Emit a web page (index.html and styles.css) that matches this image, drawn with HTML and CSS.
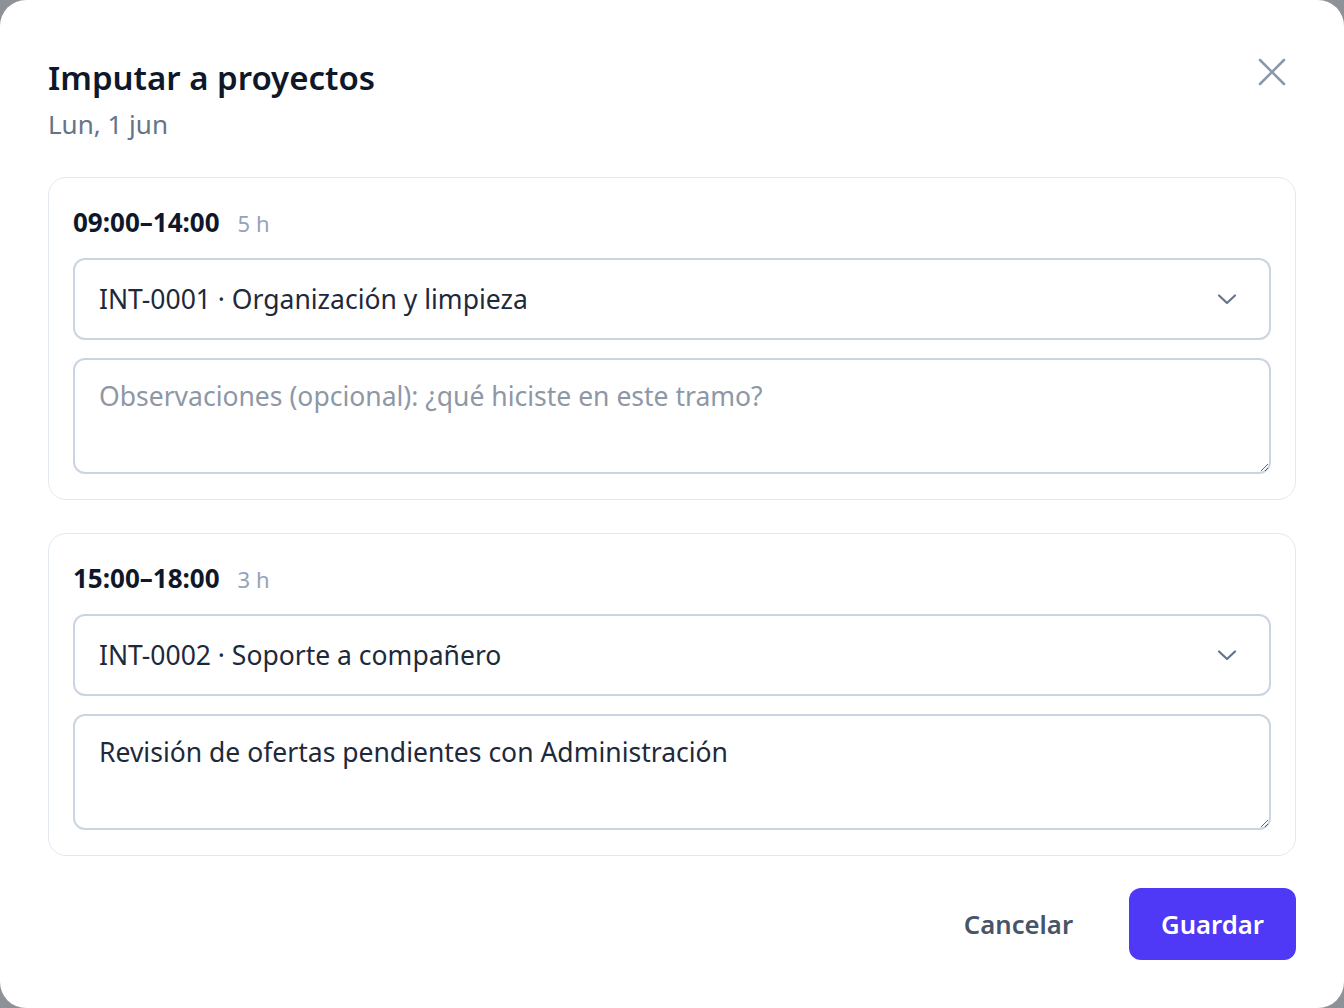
FILE: index.html
```html
<!DOCTYPE html>
<html lang="es">
<head>
<meta charset="utf-8">
<title>Imputar a proyectos</title>
<link rel="stylesheet" href="styles.css">
</head>
<body>
<div class="modal">
  <header class="modal-header">
    <div class="titles">
      <h1 class="title">Imputar a proyectos</h1>
      <p class="subtitle">Lun, 1 jun</p>
    </div>
    <button class="close" aria-label="Cerrar">
      <svg width="34" height="34" viewBox="0 0 34 34" fill="none" stroke="currentColor" stroke-width="2.6" stroke-linecap="round"><path d="M5 5L29 29M29 5L5 29"/></svg>
    </button>
  </header>

  <section class="slot">
    <div class="slot-head"><span class="range">09:00–14:00</span><span class="hours">5 h</span></div>
    <div class="select"><span>INT-0001 · Organización y limpieza</span>
      <svg width="22" height="14" viewBox="0 0 22 14" fill="none" stroke="currentColor" stroke-width="2.2" stroke-linecap="round" stroke-linejoin="round"><path d="M3 3.5l8 7.5 8-7.5"/></svg>
    </div>
    <textarea class="notes" placeholder="Observaciones (opcional): ¿qué hiciste en este tramo?"></textarea>
  </section>

  <section class="slot">
    <div class="slot-head"><span class="range">15:00–18:00</span><span class="hours">3 h</span></div>
    <div class="select"><span>INT-0002 · Soporte a compañero</span>
      <svg width="22" height="14" viewBox="0 0 22 14" fill="none" stroke="currentColor" stroke-width="2.2" stroke-linecap="round" stroke-linejoin="round"><path d="M3 3.5l8 7.5 8-7.5"/></svg>
    </div>
    <textarea class="notes" placeholder="Observaciones (opcional): ¿qué hiciste en este tramo?">Revisión de ofertas pendientes con Administración</textarea>
  </section>

  <footer class="actions">
    <button class="btn btn-ghost">Cancelar</button>
    <button class="btn btn-primary">Guardar</button>
  </footer>
</div>
</body>
</html>
```
FILE: styles.css
```css
* { box-sizing: border-box; }
html, body { margin: 0; padding: 0; }
body {
  background: #8f9199;
  font-family: "Noto Sans", "Open Sans", sans-serif;
  color: #0f172a;
  overflow: hidden;
}
.modal {
  width: 1344px;
  height: 1008px;
  background: #ffffff;
  border-radius: 26px;
  padding: 56px 48px 48px;
  display: flex;
  flex-direction: column;
}
.modal-header {
  display: flex;
  justify-content: space-between;
  align-items: flex-start;
  margin-bottom: 37px;
}
.title {
  margin: 0;
  font-size: 33px;
  line-height: 44px;
  font-weight: 600;
  color: #0f172a;
}
.subtitle {
  margin: 8px 0 0;
  font-size: 26px;
  line-height: 32px;
  color: #64748b;
}
.close {
  border: 0;
  background: none;
  padding: 0;
  margin: -1px 7px 0 0;
  color: #8b98ab;
  cursor: pointer;
  display: flex;
}
.slot {
  border: 1.5px solid #e2e8f0;
  border-radius: 18px;
  padding: 24px 24px 25px;
  display: flex;
  flex-direction: column;
}
.slot + .slot { margin-top: 33px; }
.slot-head {
  display: flex;
  align-items: baseline;
  gap: 18px;
  height: 40px;
  line-height: 40px;
  margin-bottom: 16px;
}
.range {
  font-size: 26px;
  font-weight: 700;
  color: #0f172a;
}
.hours {
  font-size: 22px;
  color: #94a3b8;
}
.select {
  height: 82px;
  border: 2px solid #cbd5e1;
  border-radius: 12px;
  padding: 0 31px 0 24px;
  display: flex;
  align-items: center;
  justify-content: space-between;
  font-size: 26.5px;
  color: #1e293b;
}
.select svg { color: #64748b; }
.notes {
  margin-top: 18px;
  height: 116px;
  border: 2px solid #cbd5e1;
  border-radius: 12px;
  padding: 18px 24px;
  font-family: inherit;
  font-size: 26.5px;
  line-height: 36px;
  color: #1e293b;
  resize: vertical;
  outline: none;
  display: block;
  width: 100%;
}
.notes::placeholder { color: #8e97a6; }
.actions {
  margin-top: 32px;
  display: flex;
  justify-content: flex-end;
  gap: 24px;
}
.btn {
  height: 72px;
  border: 0;
  border-radius: 12px;
  font-family: inherit;
  font-size: 25.7px;
  font-weight: 600;
  padding: 0 32px;
  cursor: pointer;
}
.btn-ghost { background: transparent; color: #475569; }
.btn-primary { background: #4f39f6; color: #ffffff; }
```
